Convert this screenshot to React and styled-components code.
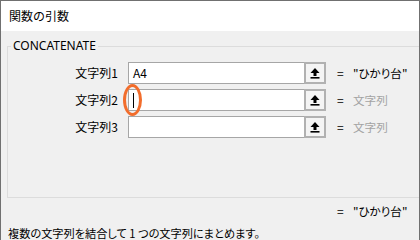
import React from "react";
import styled, { createGlobalStyle } from "styled-components";

const Global = createGlobalStyle`
  html, body { margin: 0; padding: 0; background: #ffffff; }
  body { font-family: "Segoe UI", "Noto Sans CJK JP", "Noto Sans", sans-serif; }
`;

const FONT = `"Noto Sans CJK JP", "Noto Sans", sans-serif`;

const Dialog = styled.div`
  width: 420px;
  height: 240px;
  box-sizing: border-box;
  border: 1px solid #707070;
  border-bottom: none;
  background: #f0f0f0;
  overflow: hidden;
  display: flex;
  flex-direction: column;
  font-family: ${FONT};
  font-size: 12px;
  color: #000;
`;

const TitleBar = styled.div`
  height: 30px;
  flex: none;
  background: #ffffff;
  display: flex;
  align-items: center;
  padding-left: 8px;
  font-size: 12px;
  line-height: 16px;
`;

const Body = styled.div`
  padding: 7px 0 0 6px;
  display: flex;
  flex-direction: column;
`;

const GroupBox = styled.fieldset`
  margin: 0;
  width: 440px;
  min-width: 0;
  box-sizing: border-box;
  border: 1px solid #dcdcdc;
  padding: 8px 0 59px 0;
  display: flex;
  flex-direction: column;
  gap: 5px;
`;

const Legend = styled.legend`
  margin-left: 3px;
  padding: 0 2px;
  font-family: "Segoe UI", "Noto Sans", sans-serif;
  font-size: 12px;
  line-height: 16px;
`;

const Row = styled.div`
  display: flex;
  align-items: center;
  height: 22px;
`;

const Label = styled.div`
  width: 110px;
  margin-right: 10px;
  text-align: right;
  line-height: 16px;
`;

const InputBox = styled.div`
  position: relative;
  width: 176px;
  height: 22px;
  box-sizing: border-box;
  background: #ffffff;
  border: 1px solid #a6a6a6;
  border-right: none;
  display: flex;
  align-items: center;
  padding-left: 4px;
  line-height: 16px;
`;

const Caret = styled.span`
  display: block;
  width: 1px;
  height: 15px;
  background: #000;
`;

const Highlight = styled.span`
  position: absolute;
  left: -6px;
  top: -6px;
  width: 13px;
  height: 26px;
  border: 3px solid #f26d2c;
  border-radius: 50%;
`;

const RefButton = styled.div`
  width: 22px;
  height: 22px;
  box-sizing: border-box;
  border: 2px solid #b1b1b1;
  background: #f4f4f4;
  display: flex;
  align-items: center;
  justify-content: center;
`;

const Equals = styled.span`
  margin-left: 11px;
  width: 7px;
  line-height: 16px;
`;

const Value = styled.span`
  margin-left: 9px;
  line-height: 16px;
  font-size: 11.6px;
  font-feature-settings: "palt";
  color: ${(p) => (p.$muted ? "#a3a3a3" : "#000")};
`;

const ResultRow = styled.div`
  display: flex;
  align-items: center;
  height: 16px;
  margin-top: 5px;
  padding-left: 319px;
`;

const Description = styled.div`
  margin-top: 6px;
  padding-left: 1px;
  line-height: 16px;
  font-size: 11.2px;
  white-space: nowrap;
  font-feature-settings: "palt";
`;

const UpArrow = () => (
  <svg width="10" height="11" viewBox="0 0 10 11">
    <polygon points="5,0 9.5,5 0.5,5" fill="#000" />
    <rect x="3.5" y="4.5" width="3" height="3.5" fill="#000" />
    <rect x="0.5" y="9" width="9" height="1.6" fill="#000" />
  </svg>
);

const rows = [
  { label: "文字列1", text: "A4", value: "\"ひかり台\"", muted: false },
  { label: "文字列2", caret: true, value: "文字列", muted: true },
  { label: "文字列3", value: "文字列", muted: true },
];

export default function App() {
  return (
    <>
      <Global />
      <Dialog>
        <TitleBar>関数の引数</TitleBar>
        <Body>
          <GroupBox>
            <Legend>CONCATENATE</Legend>
            {rows.map((r) => (
              <Row key={r.label}>
                <Label>{r.label}</Label>
                <InputBox>
                  {r.text}
                  {r.caret && (
                    <>
                      <Caret />
                      <Highlight />
                    </>
                  )}
                </InputBox>
                <RefButton>
                  <UpArrow />
                </RefButton>
                <Equals>=</Equals>
                <Value $muted={r.muted}>{r.value}</Value>
              </Row>
            ))}
          </GroupBox>
          <ResultRow>
            <Equals>=</Equals>
            <Value>"ひかり台"</Value>
          </ResultRow>
          <Description>複数の文字列を結合して 1 つの文字列にまとめます。</Description>
        </Body>
      </Dialog>
    </>
  );
}
